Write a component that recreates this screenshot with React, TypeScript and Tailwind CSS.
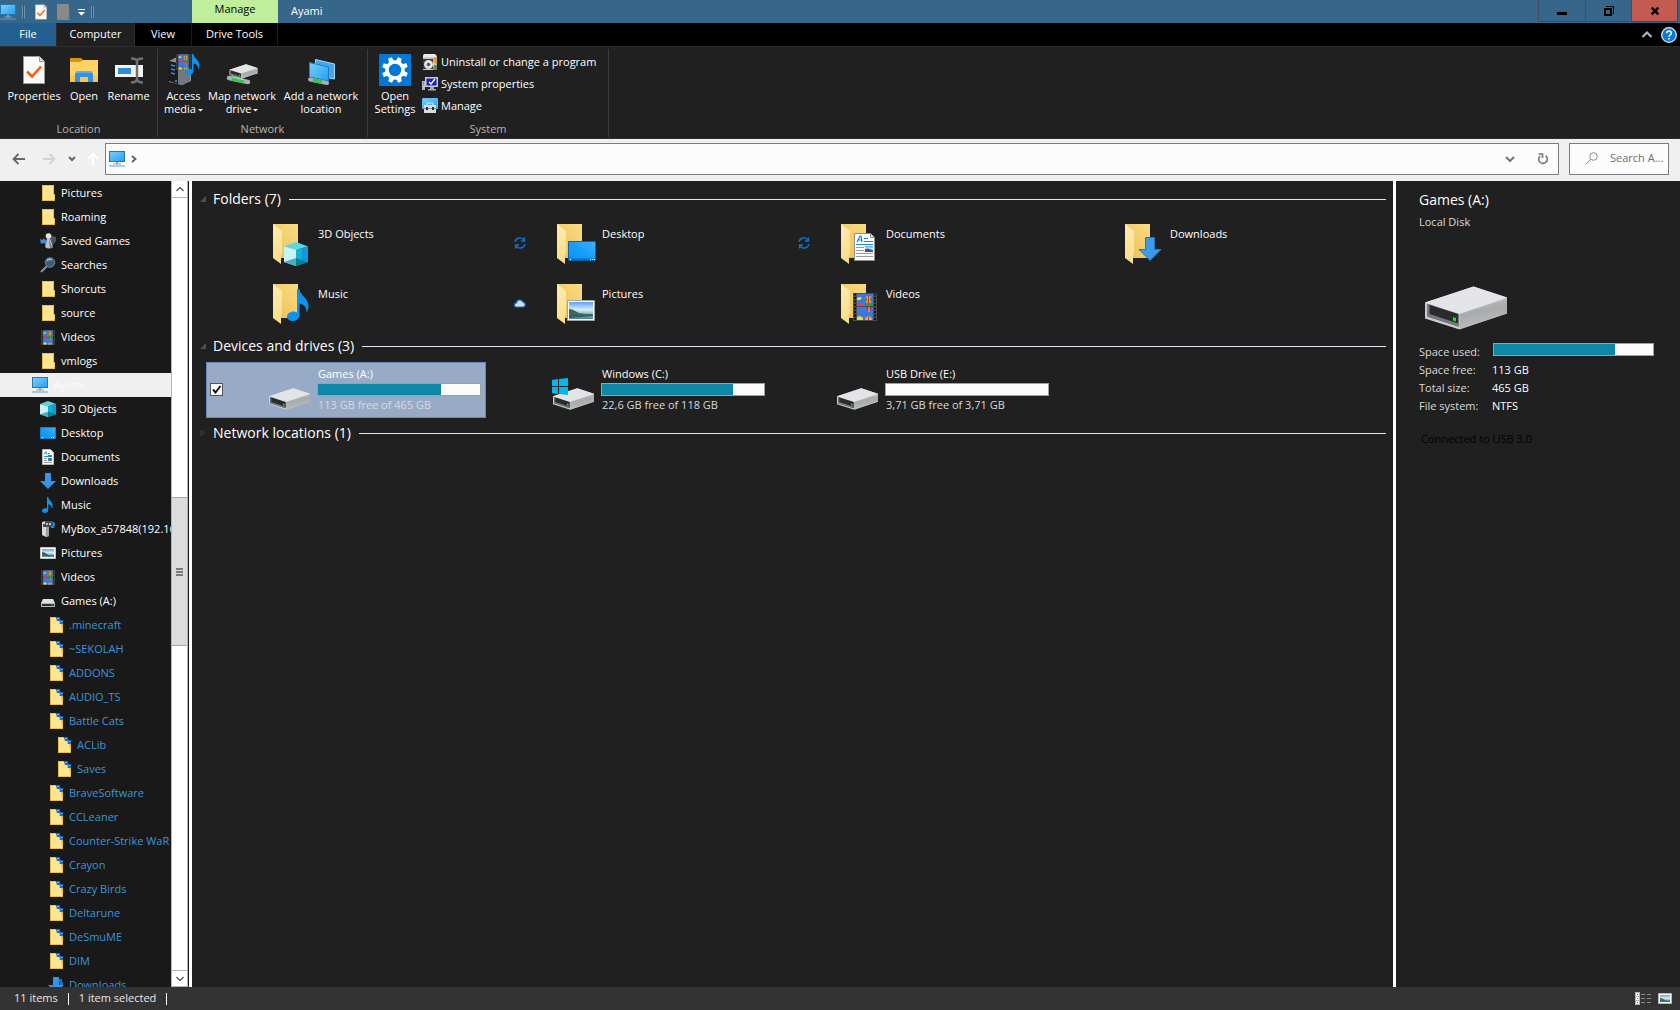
import { useState } from 'react';
import type { ReactNode } from 'react';

/* ---------- icons ---------- */

// shared gradients, mounted once
function Gradients() {
  return (
    <svg width="0" height="0" className="absolute" aria-hidden="true">
      <defs>
        <linearGradient id="screen" x1="0" y1="0" x2="1" y2="1">
          <stop offset="0" stopColor="#7dd0fb" />
          <stop offset="1" stopColor="#1fa0f4" />
        </linearGradient>
        <linearGradient id="desk" x1="0" y1="1" x2="1" y2="0">
          <stop offset="0" stopColor="#0a93f5" />
          <stop offset="0.5" stopColor="#1a9dfb" />
          <stop offset="1" stopColor="#3fb2ff" />
        </linearGradient>
        <linearGradient id="folderBack" x1="0" y1="1" x2="1" y2="0">
          <stop offset="0" stopColor="#e9bf55" />
          <stop offset="1" stopColor="#fbdc84" />
        </linearGradient>
        <linearGradient id="folderFront" x1="0" y1="0" x2="0" y2="1">
          <stop offset="0" stopColor="#ffebb0" />
          <stop offset="1" stopColor="#fbdd86" />
        </linearGradient>
        <linearGradient id="side" x1="0" y1="0" x2="0.3" y2="1">
          <stop offset="0" stopColor="#c4c5c7" />
          <stop offset="0.5" stopColor="#a9aaac" />
          <stop offset="1" stopColor="#bcbdbf" />
        </linearGradient>
        <linearGradient id="sky" x1="0" y1="0" x2="0" y2="1">
          <stop offset="0" stopColor="#5aa2f0" />
          <stop offset="0.45" stopColor="#d9ecfa" />
          <stop offset="0.7" stopColor="#8fb8c4" />
          <stop offset="1" stopColor="#4b8294" />
        </linearGradient>
      </defs>
    </svg>
  );
}

function PcIcon() {
  return (
    <svg className="h-4 w-4 shrink-0" viewBox="0 0 16 16" aria-hidden="true">
      <rect x="0.5" y="0.5" width="15" height="10" fill="url(#screen)" stroke="#2b78a8" />
      <path d="M7 11h2v1.500h3v1H4v-1h3z" fill="#8fa5b5" />
      <path d="M0 14.500h16v1H0z" fill="#6f9dbd" />
    </svg>
  );
}

function SheetCheck({ className }: { className: string }) {
  return (
    <svg className={className} viewBox="0 0 22 28" aria-hidden="true">
      <path d="M0.500 0.500h16l5 5v22h-21z" fill="#fafafa" stroke="#9a9a9a" />
      <path d="M16.500 0.500v5h5" fill="#dcdcdc" stroke="#9a9a9a" />
      <path d="M4 15.500l5 5L18 10.500" fill="none" stroke="#f0601c" strokeWidth="2.600" />
    </svg>
  );
}

function OpenFolderIcon() {
  return (
    <svg className="h-8 w-8" viewBox="0 0 32 32" aria-hidden="true">
      <path d="M2 4h11l2 2h15v4H2z" fill="#d9930f" />
      <path d="M2 8h10l3-2h15v22H2z" fill="#fcd364" />
      <path d="M2 22h28v6H2z" fill="#f6c64f" />
      <path d="M7 28v-8l2-3h14l2 3v8h-5v-5h-8v5z" fill="#3791e0" />
      <path d="M9 17h14l1 2H8z" fill="#5aaef0" />
    </svg>
  );
}

function RenameIcon() {
  return (
    <svg className="h-8 w-8" viewBox="0 0 32 32" aria-hidden="true">
      <path d="M2 11h28v12H2z" fill="#f5f5f5" />
      <path d="M5 14h13v6H5z" fill="#2f8ae0" />
      <path d="M18 4.500q6 0 6 3v17q0 4-6 4M30 4.500q-6 0-6 3v17q0 4 6 4" fill="none" stroke="#6f6f6f" strokeWidth="2.500" />
    </svg>
  );
}

function Film({ x, y, w, h }: { x: number; y: number; w: number; h: number }) {
  return (
    <svg x={x} y={y} width={w} height={h} viewBox="0 0 24 28" preserveAspectRatio="none">
      <path d="M0 0h24v28H0z" fill="#4b4b4b" />
      <path d="M2 0.500v28M22 0.500v28" stroke="#161616" strokeWidth="2" strokeDasharray="2 1.500" />
      <path d="M4 1h16v12H4zM4 14h16v13H4z" fill="#3f78dd" />
      <path d="M4 5l3-1 2 1-2 2H4z" fill="#e9e24a" />
      <path d="M4 10h3l2 1 2-1v3H4z" fill="#d5406d" />
      <path d="M12 11h8v2h-9z" fill="#2c9b3c" />
      <circle cx="15.500" cy="6.500" r="3.500" fill="#f6d21c" />
      <path d="M15.500 3v7" stroke="#c9281c" strokeWidth="1.500" />
      <path d="M13 4.500v4M18 4.500v4" stroke="#222" />
      <path d="M13 14h6l-2 4h-2z" fill="#c3283a" />
      <path d="M15.500 14h1v5h-1z" fill="#f3dd26" />
      <path d="M4 24l3-1 3 2v2H4z" fill="#e9dc4a" />
      <path d="M12 27a3.500 3.500 0 017 0z" fill="#f6b01c" />
      <path d="M15 24h1v3h-1z" fill="#d92b1c" />
    </svg>
  );
}

function Note({ x, y, w, h }: { x: number; y: number; w: number; h: number }) {
  return (
    <svg x={x} y={y} width={w} height={h} viewBox="0 0 22 32">
      <path d="M10 0h2.500c0 6 9 9 9 17 0 3-1 5-2 7 .5-6-2-8-7-9.500V26c0 3.500-3 6-6.500 6S0 30 0 27.500 3 22.500 6.500 22.500c1.300 0 2.500.3 3.500 1z" fill="#0a93f0" />
    </svg>
  );
}

// isometric hard drive, drawn on an 84x44 grid
function DriveShape() {
  return (
    <>
      <path d="M1 16.500L49.500 0.500 83 11.500v16L35.500 43.500 1 32.500z" fill="#c9cacc" />
      <path d="M1 16.500L49.500 0.500 83 11.500 35.500 28z" fill="#e3e4e8" />
      <path d="M83 12.500v15L35.500 43V28z" fill="url(#side)" />
      <path d="M3.500 18l31 10v12.500l-31-10z" fill="#2b2b2d" />
      <path d="M3.500 18l2 .7V28l29 9.500v3l-31-10z" fill="#77787a" />
      <path d="M29 31l3 1v3.500l-3-1z" fill="#25e02d" />
    </>
  );
}

function AccessMediaIcon() {
  return (
    <svg className="h-8 w-8" viewBox="0 0 32 32" aria-hidden="true">
      <path d="M1 7l8-4h14v24l-9 4-13-3z" fill="#8b8d92" />
      <path d="M1 7l9 2v21l-9-3z" fill="#1b1c20" />
      <path d="M10 15h12v12l-8 4-4-1z" fill="#75777c" />
      <path d="M3 11l4 1M3 15l4 1M3 19l4 1" stroke="#2e8be0" strokeWidth="1.500" />
      <circle cx="8" cy="27" r="1" fill="#38a0ff" />
      <Film x={8} y={0} w={15} h={16} />
      <Note x={17} y={0} w={15} h={21} />
    </svg>
  );
}

function MapDriveIcon() {
  return (
    <svg className="h-8 w-8" viewBox="0 0 32 32" aria-hidden="true">
      <path d="M3 24l19 4" stroke="#a9b0b3" strokeWidth="4.500" strokeLinecap="round" />
      <path d="M6 24.500l12 2.800" stroke="#3fbf53" strokeWidth="4.500" />
      <path d="M6 23l12 2.800" stroke="#8fe69b" strokeWidth="1.200" />
      <svg x="3" y="10" width="29" height="15" viewBox="0 0 84 44">
        <DriveShape />
      </svg>
    </svg>
  );
}

function AddLocationIcon() {
  return (
    <svg className="h-8 w-8" viewBox="0 0 32 32" aria-hidden="true">
      <path d="M10.500 5.500l19 4.500v15l-19-4z" fill="#3fa9ef" stroke="#a6dcfa" />
      <path d="M4.500 8.500l19 4.500v14l-19-4z" fill="url(#screen)" stroke="#1c80c0" />
      <path d="M5 25.500l17 3.500" stroke="#a9b0b3" strokeWidth="4" strokeLinecap="round" />
      <path d="M8 26l9 2" stroke="#3fbf53" strokeWidth="4" />
    </svg>
  );
}

const teeth = [22, 67, 112, 157, 202, 247, 292, 337];

function SettingsTile() {
  return (
    <svg className="h-8 w-8" viewBox="0 0 32 32" aria-hidden="true">
      <path d="M0 0h32v32H0z" fill="#0078d7" />
      <circle cx="16" cy="16" r="8" fill="none" stroke="#fff" strokeWidth="3.500" />
      {teeth.map((a) => (
        <path key={a} d="M13.500 7.500l.5-4.500h4l.5 4.500z" fill="#fff" transform={`rotate(${a} 16 16)`} />
      ))}
    </svg>
  );
}

function ProgramIcon() {
  return (
    <svg className="h-4 w-4" viewBox="0 0 16 16" aria-hidden="true">
      <path d="M1 1l2-1h10l2 2v14H1z" fill="#c9cbc6" />
      <path d="M2 0h11l1 3H1z" fill="#ecece8" />
      <path d="M11 4l4-1v8l-3-3z" fill="#e79a3c" />
      <path d="M1 5h10v10H1z" fill="#38393b" />
      <path d="M12 11h3v5h-4z" fill="#5d8e58" />
      <circle cx="6.500" cy="10.500" r="4.500" fill="#e3e4e6" />
      <circle cx="6.500" cy="10.500" r="1.800" fill="#55575b" />
    </svg>
  );
}

function SystemIcon() {
  return (
    <svg className="h-4 w-4" viewBox="0 0 16 16" aria-hidden="true">
      <path d="M0 5h3v9H0z" fill="#b5b7b9" />
      <path d="M1 6h1v3H1z" fill="#35c23c" />
      <path d="M3 1h13v10H3z" fill="#c9cbd2" />
      <path d="M4.500 2.500h10v7h-10z" fill="#0f22c8" />
      <path d="M7 6l2 2 4-5" fill="none" stroke="#fff" strokeWidth="1.500" />
      <path d="M8 11h4v2h2v1.500H6V13h2z" fill="#a6a8ac" />
    </svg>
  );
}

function ManageIcon() {
  return (
    <svg className="h-4 w-4" viewBox="0 0 16 16" aria-hidden="true">
      <path d="M0.500 0.500h15v10h-15z" fill="url(#screen)" stroke="#5fbaf0" />
      <path d="M5 7V5h6v2" fill="none" stroke="#e7e8ea" />
      <path d="M2 7h12v8H2z" fill="#d9dbde" />
      <path d="M2 10h12v1H2z" fill="#8e9195" />
      <path d="M4 9h2v3H4zM10 9h2v3h-2z" fill="#2c2d30" />
    </svg>
  );
}

function SmallFolder({ linked = false }: { linked?: boolean }) {
  return (
    <svg className="h-4 w-4 shrink-0" viewBox="0 0 16 16" aria-hidden="true">
      {linked ? (
        <>
          <path d="M2 0h7v3h3v3h3v10H2z" fill="#e9bf4c" />
          <path d="M3 1h5v3h3v3h2v8H3z" fill="#ffe591" />
          <path d="M13 10h1v5h-2v-3z" fill="#ffe591" />
          <path d="M8 0h4v3h3v4h-3V4H9V2H8z" fill="#1f6fc4" />
          <path d="M9 1h2v1H9zM13 4h1v1h-1z" fill="#68b5f5" />
        </>
      ) : (
        <>
          <path d="M2 0h12v9h1v7H2z" fill="#e9bf4c" />
          <path d="M3 1h10v14H3z" fill="#ffe591" />
          <path d="M13 10h1v5h-2v-3z" fill="#ffe591" />
        </>
      )}
    </svg>
  );
}

function CubeShape() {
  return (
    <>
      <path d="M0 4.500L12 0l12 4.500L12 8z" fill="#5fd6dd" />
      <path d="M0 4.500L12 8v16L0 20z" fill="#c8f2f4" />
      <path d="M24 4.500L12 8v16l12-4z" fill="#0fb4d4" />
      <path d="M24 4.500L18 6v12l6 2z" fill="#1496dd" />
      <path d="M0 20l12-4v8z" fill="#3fb2bd" />
      <path d="M12 16l12 4-12 4z" fill="#087f98" />
    </>
  );
}

function DocShape() {
  return (
    <>
      <path d="M0.500 0.500h16l4 4v23h-20z" fill="#fcfcfc" stroke="#8e8e8e" />
      <path d="M16.500 0.500v4h4" fill="#ddd" stroke="#8e8e8e" />
      <path d="M3 9l3-6h1l1 6M4.500 7h3" fill="none" stroke="#1a83cf" strokeWidth="1.200" />
      <path d="M10 5.500h4M10 8.500h9M2 11.500h17" stroke="#1a8bd6" />
      <path d="M2 14.500h8M2 17.500h8M2 20.500h17M2 23.500h17" stroke="#9c9c9c" />
      <path d="M11 13h8v6h-8z" fill="url(#sky)" />
      <path d="M11 16l3-.5 5 2V19h-8z" fill="#30598a" />
    </>
  );
}

function PhotoShape() {
  return (
    <>
      <path d="M0.500 0.500h27v20h-27z" fill="#fff" stroke="#a2a2a2" />
      <path d="M2 2h24v17H2z" fill="url(#sky)" />
      <path d="M2 9c3 0 5 1 8 3s10 2 16 2v1H2z" fill="#3c6a4c" />
      <path d="M2 15h24v1l-12 1-12 1z" fill="#2f6070" />
    </>
  );
}

function ArrowShape() {
  return <path d="M7.500 0.500h9v12H23L12 23.500 1 12.500h6.500z" fill="#3b9aea" stroke="#1f78c5" />;
}

function DesktopShape() {
  return (
    <>
      <path d="M0.500 0.500h27v19h-27z" fill="url(#desk)" stroke="#0a62a8" />
      <path d="M1 17.500h26v1.500H1z" fill="#0b6fc0" />
      <path d="M2 18.500h1M22 18.500h5" stroke="#fff" strokeDasharray="1 1" />
    </>
  );
}

// 16px navigation pane icons
function NavIcon({ kind }: { kind: string }) {
  if (kind === 'folder') return <SmallFolder />;
  if (kind === 'linked') return <SmallFolder linked />;
  if (kind === 'pc') return <PcIcon />;
  return (
    <svg className="h-4 w-4 shrink-0" viewBox="0 0 16 16" aria-hidden="true">
      {kind === 'saved' && (
        <>
          <path d="M10 2l6 2v4l-3 4-2-1z" fill="#4c5257" />
          <circle cx="8.500" cy="3" r="2.800" fill="#dfe5e8" />
          <path d="M7 5h3l3 9q-4 3-8 0z" fill="#b9c2c7" />
          <path d="M9 6l3 8q-1 1-2 1z" fill="#6f7a80" />
          <path d="M0 6l3 1V5l4 3-1 3-3-1-2 1z" fill="#3d94dd" />
        </>
      )}
      {kind === 'search' && (
        <>
          <path d="M1 15l6-6" stroke="#8296a6" strokeWidth="2" />
          <circle cx="10" cy="5.500" r="4.800" fill="#3c607c" stroke="#71838f" />
          <path d="M7 4q2-3 5-1" fill="none" stroke="#9fc3dd" strokeWidth="1.500" />
        </>
      )}
      {kind === 'video' && <Film x={1} y={1} w={14} h={15} />}
      {kind === 'cube' && (
        <svg width="16" height="16" viewBox="0 0 24 24">
          <CubeShape />
        </svg>
      )}
      {kind === 'desktop' && (
        <>
          <path d="M0.500 2.500h15v11h-15z" fill="url(#desk)" stroke="#1b7fd0" />
          <path d="M2 12.500h1M11 12.500h4" stroke="#fff" strokeDasharray="1 1" />
        </>
      )}
      {kind === 'doc' && (
        <>
          <path d="M2.500 0.500h8l3 3v12h-11z" fill="#fff" stroke="#bdbdbd" />
          <path d="M4 5.500l2-3 1 3M8 4.500h2M8 6.500h4M4 7.500h8" fill="none" stroke="#1a8bd6" />
          <path d="M4 9.500h3M4 11.500h3M4 13.500h8" stroke="#999" />
          <path d="M8 9h4v3H8z" fill="#46759d" />
        </>
      )}
      {kind === 'down' && <path d="M5 0h6v8h5l-8 8-8-8h5z" fill="#3593e8" />}
      {kind === 'downlinked' && (
        <>
          <path d="M5 0h6v8h5l-8 8-8-8h5z" fill="#3593e8" />
          <path d="M11 2h3v3h1v3h-3V5h-1z" fill="#1f6fc4" />
        </>
      )}
      {kind === 'music' && <Note x={2} y={0} w={11} h={16} />}
      {kind === 'box' && (
        <>
          <path d="M2 1l4-1 3 1v14l-3 1-4-2z" fill="#d5d8d5" />
          <path d="M6 3l3-1v13l-3 1z" fill="#9da19e" />
          <path d="M3 3h2v3H3z" fill="#494c4b" />
          <path d="M5 0h8v6H5z" fill="#454b50" />
          <path d="M6 2h2v2H6zM9 2h2v2H9z" fill="#9fc6ea" />
          <path d="M13 1h1q2 2 1 5l-1-2v3h-3V5h2z" fill="#0a93f0" />
        </>
      )}
      {kind === 'picture' && (
        <>
          <path d="M0.500 2.500h15v11h-15z" fill="#fff" stroke="#c6c6c6" />
          <path d="M2 4h12v8H2z" fill="url(#sky)" />
          <path d="M2 7q3 0 5 2t7 1v1H2z" fill="#3c6a5c" />
        </>
      )}
      {kind === 'drive' && (
        <>
          <path d="M3 6h10l2 4H1z" fill="#e1e2e4" />
          <path d="M1 10h14v4H1z" fill="#b5b6b8" />
          <path d="M2 11h12v2H2z" fill="#2e2f30" />
          <path d="M11 11.500h1.500v1H11z" fill="#25e02d" />
        </>
      )}
    </svg>
  );
}

// 48px tile icon: folder with an overlay, or a drive
function TileIcon({ kind }: { kind: string }) {
  if (kind === 'drive' || kind === 'windows') {
    return (
      <svg className="h-12 w-12 shrink-0" viewBox="0 0 48 48" aria-hidden="true">
        <svg x="3" y="23" width="43" height="22" viewBox="0 0 84 44">
          <DriveShape />
        </svg>
        {kind === 'windows' && (
          <path d="M3 15l6-1v7H3zM10 14l9-1v8h-9zM3 22h6v7l-6-1zM10 22h9v8l-9-1z" fill="#00b7f0" />
        )}
      </svg>
    );
  }
  return (
    <svg className="h-12 w-12 shrink-0" viewBox="0 0 48 48" aria-hidden="true">
      <path d="M8 5h25v34H8z" fill="url(#folderBack)" />
      <path d="M8 5l9 7v23l-1 1v9l-8-6z" fill="url(#folderFront)" />
      {kind === 'cube' && (
        <svg x="19" y="23" width="24" height="24" viewBox="0 0 24 24">
          <CubeShape />
        </svg>
      )}
      {kind === 'desktop' && (
        <svg x="19" y="22" width="28" height="20" viewBox="0 0 28 20">
          <DesktopShape />
        </svg>
      )}
      {kind === 'doc' && (
        <svg x="21" y="14" width="21" height="28" viewBox="0 0 21 28">
          <DocShape />
        </svg>
      )}
      {kind === 'down' && (
        <svg x="21" y="18" width="24" height="24" viewBox="0 0 24 24">
          <ArrowShape />
        </svg>
      )}
      {kind === 'music' && <Note x={22} y={10} w={22} h={32} />}
      {kind === 'picture' && (
        <svg x="18" y="21" width="28" height="21" viewBox="0 0 28 21">
          <PhotoShape />
        </svg>
      )}
      {kind === 'video' && <Film x={20} y={14} w={24} h={28} />}
    </svg>
  );
}

function SyncIcon() {
  return (
    <svg className="h-3 w-3" viewBox="0 0 12 12" fill="none" stroke="#0f74d1" strokeWidth="1.300" aria-label="Syncing">
      <path d="M1 5a5 5 0 019-2M10.500 0.500V4H7M11 7a5 5 0 01-9 2M1.500 11.500V8H5" />
    </svg>
  );
}

function CloudIcon() {
  return (
    <svg className="h-3 w-3" viewBox="0 0 12 12" aria-label="Online only">
      <path d="M2.500 10a2 2 0 010-4.200A3.300 3.300 0 018.800 5 2.600 2.600 0 019.500 10z" fill="#d9dde0" stroke="#1375d0" strokeWidth="1.200" />
    </svg>
  );
}

/* ---------- data ---------- */

type NavItem = { name: string; icon: string; level: number };

const navItems: NavItem[] = [
  { name: 'Pictures', icon: 'folder', level: 1 },
  { name: 'Roaming', icon: 'folder', level: 1 },
  { name: 'Saved Games', icon: 'saved', level: 1 },
  { name: 'Searches', icon: 'search', level: 1 },
  { name: 'Shorcuts', icon: 'folder', level: 1 },
  { name: 'source', icon: 'folder', level: 1 },
  { name: 'Videos', icon: 'video', level: 1 },
  { name: 'vmlogs', icon: 'folder', level: 1 },
  { name: 'Ayami', icon: 'pc', level: 0 },
  { name: '3D Objects', icon: 'cube', level: 1 },
  { name: 'Desktop', icon: 'desktop', level: 1 },
  { name: 'Documents', icon: 'doc', level: 1 },
  { name: 'Downloads', icon: 'down', level: 1 },
  { name: 'Music', icon: 'music', level: 1 },
  { name: 'MyBox_a57848(192.16', icon: 'box', level: 1 },
  { name: 'Pictures', icon: 'picture', level: 1 },
  { name: 'Videos', icon: 'video', level: 1 },
  { name: 'Games (A:)', icon: 'drive', level: 1 },
  { name: '.minecraft', icon: 'linked', level: 2 },
  { name: '~SEKOLAH', icon: 'linked', level: 2 },
  { name: 'ADDONS', icon: 'linked', level: 2 },
  { name: 'AUDIO_TS', icon: 'linked', level: 2 },
  { name: 'Battle Cats', icon: 'linked', level: 2 },
  { name: 'ACLib', icon: 'linked', level: 3 },
  { name: 'Saves', icon: 'linked', level: 3 },
  { name: 'BraveSoftware', icon: 'linked', level: 2 },
  { name: 'CCLeaner', icon: 'linked', level: 2 },
  { name: 'Counter-Strike WaR', icon: 'linked', level: 2 },
  { name: 'Crayon', icon: 'linked', level: 2 },
  { name: 'Crazy Birds', icon: 'linked', level: 2 },
  { name: 'Deltarune', icon: 'linked', level: 2 },
  { name: 'DeSmuME', icon: 'linked', level: 2 },
  { name: 'DIM', icon: 'linked', level: 2 },
  { name: 'Downloads', icon: 'downlinked', level: 2 },
];

const indents = ['pl-8', 'pl-10', 'pl-12', 'pl-14'];

const folders = [
  { name: '3D Objects', icon: 'cube', status: null },
  { name: 'Desktop', icon: 'desktop', status: <SyncIcon /> },
  { name: 'Documents', icon: 'doc', status: <SyncIcon /> },
  { name: 'Downloads', icon: 'down', status: null },
  { name: 'Music', icon: 'music', status: null },
  { name: 'Pictures', icon: 'picture', status: <CloudIcon /> },
  { name: 'Videos', icon: 'video', status: null },
];

const drives = [
  { name: 'Games (A:)', icon: 'drive', free: '113 GB free of 465 GB', used: 76 },
  { name: 'Windows (C:)', icon: 'windows', free: '22,6 GB free of 118 GB', used: 81 },
  { name: 'USB Drive (E:)', icon: 'drive', free: '3,71 GB free of 3,71 GB', used: 0 },
];

/* ---------- pieces ---------- */

function UsageBar({ used, label }: { used: number; label: string }) {
  return (
    <div
      role="meter"
      aria-label={label}
      aria-valuenow={used}
      aria-valuemin={0}
      aria-valuemax={100}
      className="h-[13px] border border-[#a0a0a0] bg-[#fcfcfc]"
    >
      <div className="h-full bg-[#0f88a8]" style={{ width: `${used}%` }} />
    </div>
  );
}

function TitleBar() {
  return (
    <header className="flex h-[23px] bg-[#36678b]">
      <div className="flex w-48 items-center">
        <PcIcon />
        <span className="ml-1.5 h-3 w-[3px] border-x border-[#6f93ac] bg-[#2c5674]" />
        <button type="button" aria-label="Properties" className="ml-2.5">
          <SheetCheck className="h-4 w-3" />
        </button>
        <button type="button" aria-label="New folder" className="ml-2.5">
          <svg className="h-4 w-[13px]" viewBox="0 0 13 16" aria-hidden="true">
            <path d="M0 0h12v10h1v6H0z" fill="#898989" />
            <path d="M12 10h1v5h-2z" fill="#6c6c6c" />
          </svg>
        </button>
        <button type="button" aria-label="Customize Quick Access Toolbar" className="ml-2">
          <svg className="h-2 w-[7px]" viewBox="0 0 7 8" aria-hidden="true">
            <path d="M0 1h7v1H0zM0 4h7L3.500 7.500z" fill="#fff" />
          </svg>
        </button>
        <span className="ml-1.5 h-3 w-[3px] border-x border-[#6f93ac] bg-[#2c5674]" />
      </div>
      <span className="flex h-full w-[86px] items-center justify-center bg-[#c0ee9a] pb-1 text-black">Manage</span>
      <h1 className="flex items-center pl-[13px]">Ayami</h1>
      <div className="ml-auto flex h-[22px] pr-0.5">
        <button type="button" aria-label="Minimize" className="flex w-12 items-center justify-center border border-t-0 border-[#444d55]">
          <svg className="h-3 w-3" viewBox="0 0 12 12" aria-hidden="true">
            <path d="M1 7h10v3H1z" fill="#000" />
          </svg>
        </button>
        <button type="button" aria-label="Restore" className="flex w-[46px] items-center justify-center border-r border-b border-[#444d55]">
          <svg className="h-3 w-3" viewBox="0 0 12 12" fill="none" stroke="#000" aria-hidden="true">
            <path d="M2 4h6v6H2z" strokeWidth="2" />
            <path d="M3 1.500h7.500V9" />
          </svg>
        </button>
        <button type="button" aria-label="Close" className="flex w-[46px] items-center justify-center border-r border-b border-[#5a3b3b] bg-[#c45b50]">
          <svg className="h-2.5 w-2.5" viewBox="0 0 12 12" fill="none" stroke="#000" strokeWidth="3" aria-hidden="true">
            <path d="M2 2l8 8M10 2l-8 8" />
          </svg>
        </button>
      </div>
    </header>
  );
}

function RibbonTabs() {
  return (
    <nav className="flex h-[23px] bg-black">
      <button type="button" className="w-14 bg-[#24608f]">File</button>
      <button type="button" className="w-[79px] border-x border-[#2b2b2b] bg-[#202020]">Computer</button>
      <button type="button" className="w-14">View</button>
      <button type="button" className="w-[87px] border-x border-[#1c1c1c]">Drive Tools</button>
      <button type="button" aria-label="Minimize the ribbon" className="ml-auto">
        <svg className="h-3 w-3" viewBox="0 0 12 12" fill="none" stroke="#b4b4b4" strokeWidth="2.200" aria-hidden="true">
          <path d="M1.500 8L6 3.500 10.500 8" />
        </svg>
      </button>
      <button type="button" aria-label="Help" className="mr-[3px] ml-2">
        <svg className="h-4 w-4" viewBox="0 0 16 16" aria-hidden="true">
          <circle cx="8" cy="8" r="7.300" fill="#0a78d8" stroke="#dfe9f2" strokeWidth="1.300" />
          <path d="M5.700 6.200c0-3 4.600-3 4.600 0 0 1.600-2.200 1.700-2.200 3.500M8 11v1.600" fill="none" stroke="#fff" strokeWidth="1.600" />
        </svg>
      </button>
    </nav>
  );
}

function Caret() {
  return (
    <svg className="ml-0.5 inline h-[5px] w-[5px] align-middle" viewBox="0 0 5 5" aria-hidden="true">
      <path d="M0 1h5L2.500 3.500z" fill="#fff" />
    </svg>
  );
}

function BigButton({ icon, className, children }: { icon: ReactNode; className: string; children: ReactNode }) {
  return (
    <button type="button" className={`flex flex-col items-center pt-[5px] leading-[13px] whitespace-nowrap ${className}`}>
      {icon}
      <span className="mt-[3px]">{children}</span>
    </button>
  );
}

function SmallButton({ icon, children }: { icon: ReactNode; children: ReactNode }) {
  return (
    <button type="button" className="flex h-[22px] items-center gap-[3px] whitespace-nowrap">
      {icon}
      {children}
    </button>
  );
}

function RibbonGroup({ label, children }: { label: string; children: ReactNode }) {
  return (
    <section aria-label={label} className="flex h-[88px] flex-col border-r border-[#3c3c3c] px-1">
      <div className="flex h-[74px] items-start">{children}</div>
      <span className="text-center leading-4 text-[#b5b5b5]">{label}</span>
    </section>
  );
}

function Ribbon() {
  return (
    <div className="flex h-[93px] border-y border-[#2e2e2e] bg-[#202020] pt-0.5">
      <RibbonGroup label="Location">
        <BigButton className="w-[60px]" icon={<span className="flex h-8 items-center"><SheetCheck className="h-7 w-[22px]" /></span>}>
          Properties
        </BigButton>
        <BigButton className="w-10" icon={<OpenFolderIcon />}>Open</BigButton>
        <BigButton className="w-[49px]" icon={<RenameIcon />}>Rename</BigButton>
      </RibbonGroup>
      <RibbonGroup label="Network">
        <BigButton className="w-[43px]" icon={<AccessMediaIcon />}>
          Access<br />media<Caret />
        </BigButton>
        <BigButton className="w-[74px]" icon={<MapDriveIcon />}>
          Map network<br />drive<Caret />
        </BigButton>
        <BigButton className="w-[84px]" icon={<AddLocationIcon />}>
          Add a network<br />location
        </BigButton>
      </RibbonGroup>
      <RibbonGroup label="System">
        <BigButton className="w-[46px]" icon={<SettingsTile />}>
          Open<br />Settings
        </BigButton>
        <div className="ml-1 w-[182px] pt-0.5">
          <SmallButton icon={<ProgramIcon />}>Uninstall or change a program</SmallButton>
          <SmallButton icon={<SystemIcon />}>System properties</SmallButton>
          <SmallButton icon={<ManageIcon />}>Manage</SmallButton>
        </div>
      </RibbonGroup>
    </div>
  );
}

function AddressBar() {
  const [query, setQuery] = useState('');

  return (
    <div className="flex h-[42px] items-center bg-[#f0f0f0] pt-px pr-[11px] pb-1">
      <div className="flex w-[105px] items-center pl-3">
        <button type="button" aria-label="Back">
          <svg className="h-3.5 w-3.5" viewBox="0 0 14 14" fill="none" stroke="#686868" strokeWidth="1.800" aria-hidden="true">
            <path d="M13 7H2M6.500 2L1.500 7l5 5" />
          </svg>
        </button>
        <button type="button" aria-label="Forward" className="ml-4">
          <svg className="h-3.5 w-3.5" viewBox="0 0 14 14" fill="none" stroke="#d2d2d2" strokeWidth="1.800" aria-hidden="true">
            <path d="M1 7h11M7.500 2l5 5-5 5" />
          </svg>
        </button>
        <button type="button" aria-label="Recent locations" className="ml-3">
          <svg className="h-2 w-2" viewBox="0 0 8 8" fill="none" stroke="#686868" strokeWidth="2" aria-hidden="true">
            <path d="M1 2l3 3 3-3" />
          </svg>
        </button>
        <button type="button" aria-label="Up" className="ml-2.5">
          <svg className="h-3.5 w-3.5" viewBox="0 0 14 14" fill="none" stroke="#fff" strokeWidth="2" aria-hidden="true">
            <path d="M7 14V2M2 7l5-5 5 5" />
          </svg>
        </button>
      </div>
      <div className="flex h-8 flex-1 items-center border border-[#7d7d7d] bg-[#fcfcfc] pl-[3px]">
        <PcIcon />
        <svg className="mx-1 h-2.5 w-2.5" viewBox="0 0 10 10" fill="none" stroke="#5f5f5f" strokeWidth="1.800" aria-hidden="true">
          <path d="M3 2L6.500 5 3 8" />
        </svg>
        <span className="ml-2 text-xs text-white">Ayami</span>
        <button type="button" aria-label="Previous locations" className="ml-auto">
          <svg className="h-2.5 w-2.5" viewBox="0 0 10 10" fill="none" stroke="#747474" strokeWidth="2" aria-hidden="true">
            <path d="M1 3l4 4 4-4" />
          </svg>
        </button>
        <button type="button" aria-label="Refresh" className="mr-[9px] ml-[22px]">
          <svg className="h-3 w-3" viewBox="0 0 12 12" fill="none" stroke="#747474" strokeWidth="1.600" aria-hidden="true">
            <path d="M8.500 2.600A4.300 4.300 0 113 3M1.500 1h4v4" />
          </svg>
        </button>
      </div>
      <label className="ml-2.5 flex h-8 w-[100px] items-center border border-[#7d7d7d] bg-[#fcfcfc] pl-[15px]">
        <span className="sr-only">Search Ayami</span>
        <svg className="h-[13px] w-[13px] shrink-0" viewBox="0 0 13 13" fill="none" stroke="#8c8c8c" aria-hidden="true">
          <circle cx="8.500" cy="4.500" r="3.800" />
          <path d="M5.500 7.500L0.500 12.500" />
        </svg>
        <input
          type="text"
          value={query}
          onChange={(e) => setQuery(e.target.value)}
          placeholder="Search A..."
          className="ml-3 w-full min-w-0 bg-transparent text-[#333] placeholder-[#6d6d6d] outline-none"
        />
      </label>
    </div>
  );
}

function NavPane() {
  return (
    <aside className="flex w-48 shrink-0 bg-[#191919]">
      <ul className="h-full w-[171px] overflow-hidden">
        {navItems.map((item, i) => {
          const current = item.level === 0;
          return (
            <li key={i}>
              <a
                href="#"
                aria-current={current ? 'page' : undefined}
                className={`flex h-6 items-center gap-[5px] whitespace-nowrap ${indents[item.level]} ${
                  current ? 'bg-[#f0f0f0] text-[#fafafa]' : item.level > 1 ? 'text-[#3a96dd]' : ''
                }`}
              >
                <NavIcon kind={item.icon} />
                {item.name}
              </a>
            </li>
          );
        })}
      </ul>
      <div className="flex w-[17px] flex-col border-x border-[#b4b4b4] bg-white">
        <button type="button" aria-label="Scroll up" className="flex h-[17px] items-center justify-center border-b border-[#b4b4b4]">
          <svg className="h-2 w-2" viewBox="0 0 8 8" fill="none" stroke="#606060" strokeWidth="1.500" aria-hidden="true">
            <path d="M0.500 6L4 2.500 7.500 6" />
          </svg>
        </button>
        <div className="grow-[300]" />
        <div className="flex h-[149px] flex-col items-center justify-center gap-px border-y border-[#a6a6a6] bg-[#dcdcdc]">
          <span className="h-0.5 w-[7px] bg-[#7a7a7a]" />
          <span className="h-0.5 w-[7px] bg-[#7a7a7a]" />
          <span className="h-0.5 w-[7px] bg-[#7a7a7a]" />
        </div>
        <div className="grow-[325]" />
        <button type="button" aria-label="Scroll down" className="flex h-[17px] items-center justify-center border-y border-[#b4b4b4]">
          <svg className="h-2 w-2" viewBox="0 0 8 8" fill="none" stroke="#606060" strokeWidth="1.500" aria-hidden="true">
            <path d="M0.500 2L4 5.500 7.500 2" />
          </svg>
        </button>
      </div>
      <div className="ml-auto w-[3px] bg-white" />
    </aside>
  );
}

function GroupHeading({ open = true, children }: { open?: boolean; children: ReactNode }) {
  return (
    <h2 className="flex h-[30px] items-center pr-[7px] pb-0.5 pl-2 text-sm">
      <svg className="mr-[7px] h-1.5 w-1.5" viewBox="0 0 6 6" aria-hidden="true">
        {open ? <path d="M6 0v6H0z" fill="#4f4f4f" /> : <path d="M1 0.500L4.500 3 1 5.500z" fill="none" stroke="#424242" />}
      </svg>
      <span className="leading-6 whitespace-nowrap">{children}</span>
      <span className="ml-2 h-px flex-1 bg-[#dfe6f5]" />
    </h2>
  );
}

function Main() {
  const [checked, setChecked] = useState(true);

  return (
    <main className="min-w-0 flex-1 pt-1">
      <GroupHeading>Folders (7)</GroupHeading>
      <ul className="flex flex-wrap gap-1 pb-px pl-3.5">
        {folders.map((f) => (
          <li key={f.name} className="flex h-14 w-[280px] items-center">
            <span className="flex w-[59px] pl-6">{f.status}</span>
            <TileIcon kind={f.icon} />
            <a href="#" className="mb-[18px] ml-[5px] leading-4">{f.name}</a>
          </li>
        ))}
      </ul>
      <GroupHeading>Devices and drives (3)</GroupHeading>
      <ul className="flex flex-wrap gap-1 pb-px pl-3.5">
        {drives.map((d, i) => {
          const selected = i === 0 && checked;
          return (
            <li key={d.name} className={`flex h-14 w-[280px] items-center border pb-0.5 ${selected ? 'border-[#6788b8] bg-[#98abc6]' : 'border-transparent'}`}>
              <span className="grid w-[58px] pl-[3px]">
                {i === 0 && (
                  <>
                    <input
                      type="checkbox"
                      aria-label="Select Games (A:)"
                      checked={checked}
                      onChange={(e) => setChecked(e.target.checked)}
                      className="col-start-1 row-start-1 h-[13px] w-[13px] appearance-none border border-[#555] bg-white"
                    />
                    {checked && (
                      <svg className="pointer-events-none col-start-1 row-start-1 h-[13px] w-[13px]" viewBox="0 0 13 13" aria-hidden="true">
                        <path d="M3 6.500l2.500 3L10.500 3" fill="none" stroke="#111" strokeWidth="2" />
                      </svg>
                    )}
                  </>
                )}
              </span>
              <TileIcon kind={d.icon} />
              <div className="ml-1 w-[164px] leading-4">
                <a href="#" className="mb-px block pl-px">{d.name}</a>
                <UsageBar used={d.used} label={`${d.name} space used`} />
                <p className={`mt-px pl-px ${selected ? 'text-[#d5dae2]' : 'text-[#dadada]'}`}>{d.free}</p>
              </div>
            </li>
          );
        })}
      </ul>
      <GroupHeading open={false}>Network locations (1)</GroupHeading>
    </main>
  );
}

function DetailsPane() {
  return (
    <aside className="w-[287px] shrink-0 border-l-[3px] border-white pt-[7px] pr-[26px] pl-[23px]">
      <h2 className="text-sm leading-6">Games (A:)</h2>
      <p className="mt-0.5 leading-4 text-[#dadada]">Local Disk</p>
      <svg className="mt-14 ml-[5px] h-11 w-[84px]" viewBox="0 0 84 44" aria-hidden="true">
        <DriveShape />
      </svg>
      <dl className="mt-[13px] grid grid-cols-[73px_1fr] leading-[18px] text-[#dadada]">
        <dt>Space used:</dt>
        <dd className="pl-px"><UsageBar used={76} label="Space used" /></dd>
        <dt>Space free:</dt>
        <dd className="text-white">113 GB</dd>
        <dt>Total size:</dt>
        <dd className="text-white">465 GB</dd>
        <dt>File system:</dt>
        <dd className="text-white">NTFS</dd>
      </dl>
      <p className="mt-[15px] ml-0.5 leading-[18px] text-black">Connected to USB 3.0</p>
    </aside>
  );
}

function StatusBar() {
  return (
    <footer className="flex h-[23px] items-center bg-[#333] pr-2 pl-3.5 text-[#e8e8e8]">
      <span>11 items</span>
      <span className="mx-2.5 h-3 w-px bg-white" />
      <span>1 item selected</span>
      <span className="mx-2.5 h-3 w-px bg-white" />
      <button type="button" aria-label="Details view" className="ml-auto">
        <svg className="h-[13px] w-4" viewBox="0 0 16 13" aria-hidden="true">
          <path d="M0 0h5v13H0z" fill="#b5b5b5" />
          <path d="M1 1h3v3H1zM1 5h3v3H1zM1 9h3v3H1z" fill="#fff" />
          <path d="M2 2h1v1H2zM2 10h1v1H2z" fill="#a33" />
          <path d="M2 6h1v1H2z" fill="#37a" />
          <path d="M6 2.500h4M12 2.500h4M6 6.500h4M12 6.500h4M6 10.500h4M12 10.500h4" stroke="#8a8a8a" />
        </svg>
      </button>
      <button type="button" aria-label="Large icons view" className="ml-[7px]">
        <svg className="h-[11px] w-3.5" viewBox="0 0 14 11" aria-hidden="true">
          <path d="M0.500 0.500h13v10h-13z" fill="#fff" stroke="#b5b5b5" />
          <path d="M2 2h10v7H2z" fill="url(#sky)" />
          <path d="M2 5q3 0 4 1.500t6 1V9H2z" fill="#3c6a5c" />
        </svg>
      </button>
    </footer>
  );
}

export default function App() {
  return (
    <div className="flex h-screen flex-col overflow-hidden bg-[#202020] font-['Open_Sans','Noto_Sans',sans-serif] text-[11px] text-white">
      <Gradients />
      <TitleBar />
      <RibbonTabs />
      <Ribbon />
      <AddressBar />
      <div className="flex min-h-0 flex-1">
        <NavPane />
        <Main />
        <DetailsPane />
      </div>
      <StatusBar />
    </div>
  );
}
